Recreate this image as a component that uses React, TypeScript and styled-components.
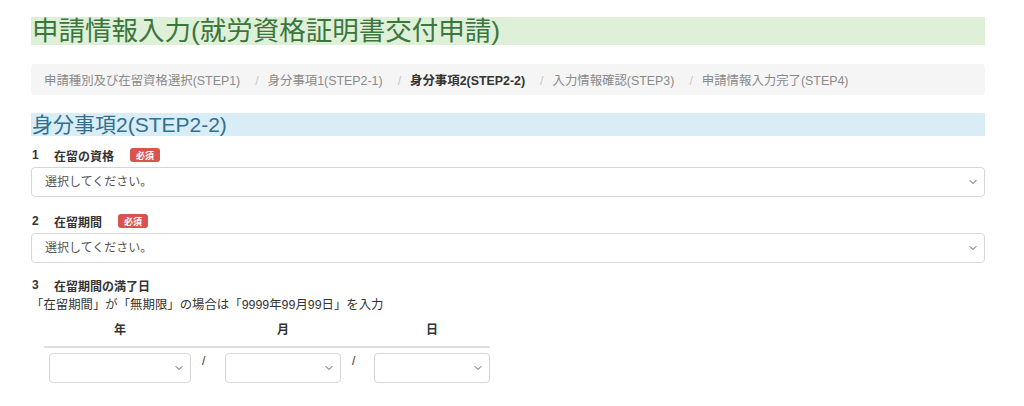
import styled, { createGlobalStyle } from "styled-components";
import { ChevronDown } from "lucide-react";

const GlobalStyle = createGlobalStyle`
	body {
		margin: 0;
		background: #fff;
		font-family: "Liberation Sans", "Noto Sans CJK JP", sans-serif;
		color: #333;
	}
`;

const Page = styled.div`
	padding: 17px 39px 0 31px;
	display: flex;
	flex-direction: column;
`;

const Title = styled.h1`
	margin: 0;
	height: 28px;
	line-height: 28px;
	font-size: 26.5px;
	font-weight: normal;
	color: #3c763d;
	background: #dff0d8;
	padding-left: 1px;
`;

const Breadcrumb = styled.ol`
	margin: 19px 0 0;
	list-style: none;
	height: 31px;
	padding: 0 13px;
	display: flex;
	align-items: center;
	background: #f5f5f5;
	border-radius: 4px;
	font-size: 12.4px;
`;

const Crumb = styled.li<{ $active?: boolean }>`
	color: ${(p) => (p.$active ? "#333" : "#8a8a8a")};
	font-weight: ${(p) => (p.$active ? "bold" : "normal")};
	white-space: nowrap;
	&:not(:first-child)::before {
		content: "/";
		color: #c8c8c8;
		font-weight: normal;
		padding: 0 9px 0 15px;
	}
`;

const Heading = styled.h2`
	margin: 18px 0 0;
	height: 23px;
	line-height: 23px;
	font-size: 21px;
	font-weight: normal;
	color: #31708f;
	background: #d9edf7;
	padding-left: 1px;
`;

const Group = styled.div<{ $first?: boolean }>`
	margin-top: ${(p) => (p.$first ? "11px" : "16px")};
	display: flex;
	flex-direction: column;
`;

const Label = styled.div<{ $tight?: boolean }>`
	height: 16px;
	margin-top: ${(p) => (p.$tight ? "-2px" : "0")};
	display: flex;
	align-items: center;
	font-size: 12px;
	font-weight: bold;
	color: #333;
	padding-left: 1px;
`;

const Num = styled.span`
	width: 22px;
`;

const Required = styled.span`
	margin-left: 16px;
	height: 14px;
	width: 30px;
	display: inline-flex;
	align-items: center;
	justify-content: center;
	background: #d9534f;
	color: #fff;
	border-radius: 3px;
	font-size: 9px;
	font-weight: bold;
`;

const SelectWrap = styled.div<{ $width?: number; $gap: number }>`
	position: relative;
	margin-top: ${(p) => p.$gap}px;
	width: ${(p) => (p.$width ? `${p.$width}px` : "100%")};
	height: 30px;
	svg {
		position: absolute;
		right: 6px;
		top: 9px;
		color: #555;
		pointer-events: none;
	}
`;

const Select = styled.select`
	appearance: none;
	width: 100%;
	height: 30px;
	padding: 0 24px 0 13px;
	border: 1px solid #d6d6d6;
	border-radius: 4px;
	background: #fff;
	font-family: inherit;
	font-size: 12px;
	color: #555;
	box-sizing: border-box;
`;

const Help = styled.p`
	margin: 4px 0 0;
	height: 16px;
	line-height: 16px;
	font-size: 12.4px;
	color: #333;
`;

const DateTable = styled.div`
	margin: 7px 0 0 13px;
	width: 451px;
	display: grid;
	grid-template-columns: 142px 34px 116px 33px 116px;
	padding-left: 5px;
	box-sizing: border-box;
`;

const Th = styled.div`
	height: 16px;
	padding: 2px 0 8px;
	line-height: 16px;
	text-align: center;
	font-size: 12px;
	font-weight: bold;
	color: #333;
`;

const Rule = styled.div`
	grid-column: 1 / -1;
	margin-left: -5px;
	height: 2px;
	background: #dedede;
`;

const Slash = styled.span`
	padding: 6px 0 0 11px;
	font-size: 12px;
	color: #333;
`;

function Dropdown({
	width,
	placeholder,
	gap = 4,
}: {
	width?: number;
	placeholder?: string;
	gap?: number;
}): JSX.Element {
	return (
		<SelectWrap $width={width} $gap={gap}>
			<Select defaultValue="">
				<option value="">{placeholder ?? ""}</option>
			</Select>
			<ChevronDown size={12} strokeWidth={2} />
		</SelectWrap>
	);
}

export default function App(): JSX.Element {
	const steps = [
		"申請種別及び在留資格選択(STEP1)",
		"身分事項1(STEP2-1)",
		"身分事項2(STEP2-2)",
		"入力情報確認(STEP3)",
		"申請情報入力完了(STEP4)",
	];

	return (
		<>
			<GlobalStyle />
			<Page>
				<Title>申請情報入力(就労資格証明書交付申請)</Title>
				<Breadcrumb>
					{steps.map((s, i) => (
						<Crumb key={s} $active={i === 2}>
							{s}
						</Crumb>
					))}
				</Breadcrumb>
				<Heading>身分事項2(STEP2-2)</Heading>

				<Group $first>
					<Label>
						<Num>1</Num>在留の資格<Required>必須</Required>
					</Label>
					<Dropdown placeholder="選択してください。" />
				</Group>

				<Group>
					<Label>
						<Num>2</Num>在留期間<Required>必須</Required>
					</Label>
					<Dropdown placeholder="選択してください。" />
				</Group>

				<Group>
					<Label $tight>
						<Num>3</Num>在留期間の満了日
					</Label>
					<Help>「在留期間」が「無期限」の場合は「9999年99月99日」を入力</Help>
					<DateTable>
						<Th>年</Th>
						<Th />
						<Th>月</Th>
						<Th />
						<Th>日</Th>
						<Rule />
						<Dropdown width={142} gap={5} />
						<Slash>/</Slash>
						<Dropdown width={116} gap={5} />
						<Slash>/</Slash>
						<Dropdown width={116} gap={5} />
					</DateTable>
				</Group>
			</Page>
		</>
	);
}
